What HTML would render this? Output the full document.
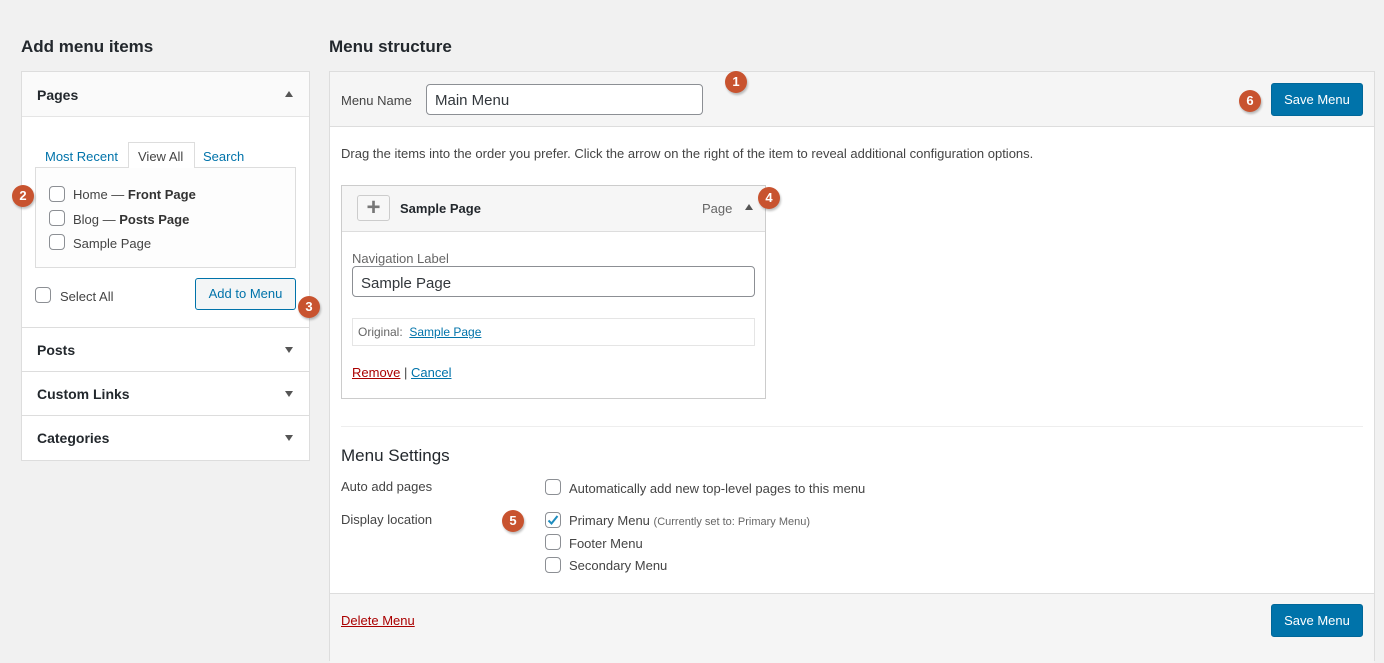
<!DOCTYPE html>
<html><head><meta charset="utf-8"><style>
*{box-sizing:border-box;margin:0;padding:0}
body{width:1384px;height:648px;background:#f1f1f1;font-family:"Liberation Sans",sans-serif;font-size:13px;color:#444;position:relative;overflow:hidden}
.a{position:absolute;white-space:nowrap}
.box{position:absolute;background:#fff;border:1px solid #ddd}
.cb{position:absolute;width:16px;height:16px;border:1px solid #8c8f94;border-radius:4px;background:#fff}
.badge{position:absolute;width:22px;height:22px;border-radius:50%;background:#c8532f;color:#fff;font-weight:bold;font-size:13px;text-align:center;line-height:22px;box-shadow:1px 2px 2px rgba(0,0,0,.25)}
.tri{position:absolute;width:0;height:0;border-left:4px solid transparent;border-right:4px solid transparent}
.up{border-bottom:6px solid #555}
.dn{border-top:6px solid #555}
.btn{position:absolute;background:#0073aa;color:#fff;border-radius:3px;text-align:center;font-size:13px;border:1px solid #006799}
a{color:#0073aa}
h2{font-size:17px;font-weight:600;color:#23282d}
.sec{position:absolute;left:0;width:288px;border-top:1px solid #ddd;height:44px}
.sec span{position:absolute;left:15px;top:14px;font-size:14px;font-weight:600;color:#23282d}
.sec i{position:absolute;left:263px;top:19px}
</style></head><body>
<h2 class="a" style="left:21px;top:37px">Add menu items</h2>
<h2 class="a" style="left:329px;top:37px">Menu structure</h2>

<div class="box" style="left:21px;top:71px;width:289px;height:390px">
 <div style="position:absolute;left:0;top:0;width:287px;height:45px;background:#fafafa;border-bottom:1px solid #e5e5e5"></div>
 <span class="a" style="left:15px;top:15px;font-size:14px;font-weight:600;color:#23282d">Pages</span>
 <i class="tri up" style="left:263px;top:19px"></i>
 <span class="a" style="left:23px;top:77px;color:#0073aa">Most Recent</span>
 <div style="position:absolute;left:106px;top:70px;width:67px;height:26px;border:1px solid #ddd;border-bottom:none;background:#fff;z-index:2"></div>
 <span class="a" style="left:116px;top:77px;color:#444;z-index:3">View All</span>
 <span class="a" style="left:181px;top:77px;color:#0073aa">Search</span>
 <div style="position:absolute;left:13px;top:95px;width:261px;height:101px;border:1px solid #ddd;background:#fdfdfd"></div>
 <div class="cb" style="left:27px;top:114px"></div><span class="a" style="left:51px;top:115px">Home — <b style="color:#333">Front Page</b></span>
 <div class="cb" style="left:27px;top:138px"></div><span class="a" style="left:51px;top:140px">Blog — <b style="color:#333">Posts Page</b></span>
 <div class="cb" style="left:27px;top:162px"></div><span class="a" style="left:51px;top:164px">Sample Page</span>
 <div class="cb" style="left:13px;top:215px"></div><span class="a" style="left:38px;top:217px">Select All</span>
 <div style="position:absolute;left:173px;top:206px;width:101px;height:32px;border:1px solid #0073aa;border-radius:3px;background:#f3f5f6;color:#0073aa;text-align:center;line-height:30px">Add to Menu</div>
 <div class="sec" style="top:255px"><span>Posts</span><i class="tri dn"></i></div>
 <div class="sec" style="top:299px"><span>Custom Links</span><i class="tri dn"></i></div>
 <div class="sec" style="top:343px;height:45px"><span>Categories</span><i class="tri dn"></i></div>
</div>
<div class="badge" style="left:12px;top:185px">2</div>
<div class="badge" style="left:298px;top:296px">3</div>

<div class="box" style="left:329px;top:71px;width:1046px;height:590px">
 <div style="position:absolute;left:0;top:0;width:1044px;height:55px;background:#f5f5f5;border-bottom:1px solid #ddd"></div>
 <span class="a" style="left:11px;top:21px">Menu Name</span>
 <div style="position:absolute;left:96px;top:12px;width:277px;height:31px;border:1px solid #8c8f94;border-radius:4px;background:#fff"></div>
 <span class="a" style="left:105px;top:20px;font-size:15px;color:#32373c">Main Menu</span>
 <div class="btn" style="left:941px;top:11px;width:92px;height:33px;line-height:31px">Save Menu</div>
 <span class="a" style="left:11px;top:74px">Drag the items into the order you prefer. Click the arrow on the right of the item to reveal additional configuration options.</span>

 <div style="position:absolute;left:11px;top:113px;width:425px;height:214px;border:1px solid #ccc;background:#fff">
  <div style="position:absolute;left:0;top:0;width:423px;height:46px;background:#f6f6f6;border-bottom:1px solid #ddd"></div>
  <div style="position:absolute;left:15px;top:9px;width:33px;height:26px;border:1px solid #ccc;border-radius:3px;background:#f7f7f7;color:#777;font-size:24px;line-height:24px;text-align:center;font-weight:bold">+</div>
  <span class="a" style="left:58px;top:15px;font-weight:bold;color:#23282d">Sample Page</span>
  <span class="a" style="left:360px;top:15px;color:#666">Page</span>
  <i class="tri up" style="left:403px;top:18px"></i>
  <span class="a" style="left:10px;top:65px;color:#666">Navigation Label</span>
  <div style="position:absolute;left:10px;top:80px;width:403px;height:31px;border:1px solid #8c8f94;border-radius:4px"></div>
  <span class="a" style="left:19px;top:89px;font-size:15px;color:#32373c">Sample Page</span>
  <div style="position:absolute;left:10px;top:132px;width:403px;height:28px;border:1px solid #e5e5e5"></div>
  <span class="a" style="left:16px;top:139px;font-size:12px;color:#666">Original: &nbsp;<a style="color:#0073aa;text-decoration:underline">Sample Page</a></span>
  <span class="a" style="left:10px;top:179px"><a style="color:#a00;text-decoration:underline">Remove</a> | <a style="text-decoration:underline">Cancel</a></span>
 </div>

 <div style="position:absolute;left:11px;top:354px;width:1022px;border-top:1px solid #eee"></div>
 <span class="a" style="left:11px;top:374px;font-size:17px;color:#23282d">Menu Settings</span>
 <span class="a" style="left:11px;top:407px">Auto add pages</span>
 <span class="a" style="left:11px;top:440px">Display location</span>
 <div class="cb" style="left:215px;top:407px"></div><span class="a" style="left:239px;top:409px">Automatically add new top-level pages to this menu</span>
 <div class="cb" style="left:215px;top:440px"></div>
 <svg class="a" style="left:217px;top:442px" width="12" height="12" viewBox="0 0 12 12"><path d="M1.5 6.5 L4.5 9.5 L10.5 2" fill="none" stroke="#1e8cbe" stroke-width="2"/></svg>
 <span class="a" style="left:239px;top:441px">Primary Menu <small style="font-size:11px;color:#666">(Currently set to: Primary Menu)</small></span>
 <div class="cb" style="left:215px;top:462px"></div><span class="a" style="left:239px;top:464px">Footer Menu</span>
 <div class="cb" style="left:215px;top:485px"></div><span class="a" style="left:239px;top:486px">Secondary Menu</span>

 <div style="position:absolute;left:0;top:521px;width:1044px;height:70px;background:#f5f5f5;border-top:1px solid #ddd"></div>
 <span class="a" style="left:11px;top:541px"><a style="color:#a00;text-decoration:underline">Delete Menu</a></span>
 <div class="btn" style="left:941px;top:532px;width:92px;height:33px;line-height:31px">Save Menu</div>
</div>
<div class="badge" style="left:725px;top:71px">1</div>
<div class="badge" style="left:758px;top:187px">4</div>
<div class="badge" style="left:502px;top:510px">5</div>
<div class="badge" style="left:1239px;top:90px">6</div>
</body></html>
